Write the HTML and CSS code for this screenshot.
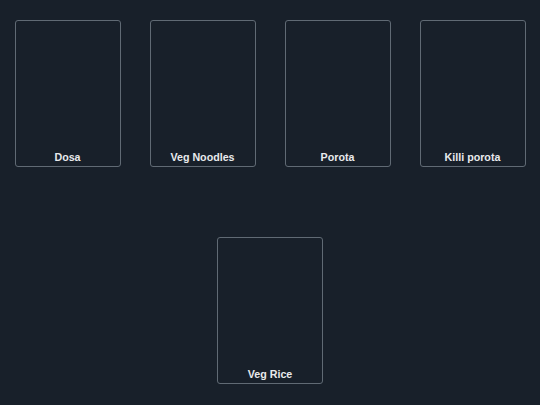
FILE: index.html
```html
<!DOCTYPE html>
<html lang="en">
<head>
    <meta charset="UTF-8">
    <title>Menu</title>
    <link rel="stylesheet" href="styles.css">
</head>
<body>
    <div class="menu-grid">
        <div class="dish-card"><span class="dish-name">Dosa</span></div>
        <div class="dish-card"><span class="dish-name">Veg Noodles</span></div>
        <div class="dish-card"><span class="dish-name">Porota</span></div>
        <div class="dish-card"><span class="dish-name">Killi porota</span></div>
        <div class="dish-card"><span class="dish-name">Veg Rice</span></div>
    </div>
</body>
</html>
```

FILE: styles.css
```css
* {
    margin: 0;
    padding: 0;
    box-sizing: border-box;
}

html, body {
    height: 100%;
}

body {
    background: #18202a;
    font-family: "Liberation Sans", Arial, sans-serif;
    color: #e8eaec;
}

/* card grid: four per row, leftovers centred */
.menu-grid {
    display: flex;
    flex-wrap: wrap;
    justify-content: center;
    row-gap: 70px;
    padding-top: 20px;
}

.dish-card {
    width: 106px;
    height: 147px;
    margin: 0 14.5px;
    border: 1px solid #606a74;
    border-radius: 3px;
    display: flex;
    flex-direction: column;
    justify-content: flex-end;
    align-items: center;
    padding-bottom: 2px;
}

.dish-name {
    font-size: 10.7px;
    font-weight: 700;
    line-height: 13px;
}
```
